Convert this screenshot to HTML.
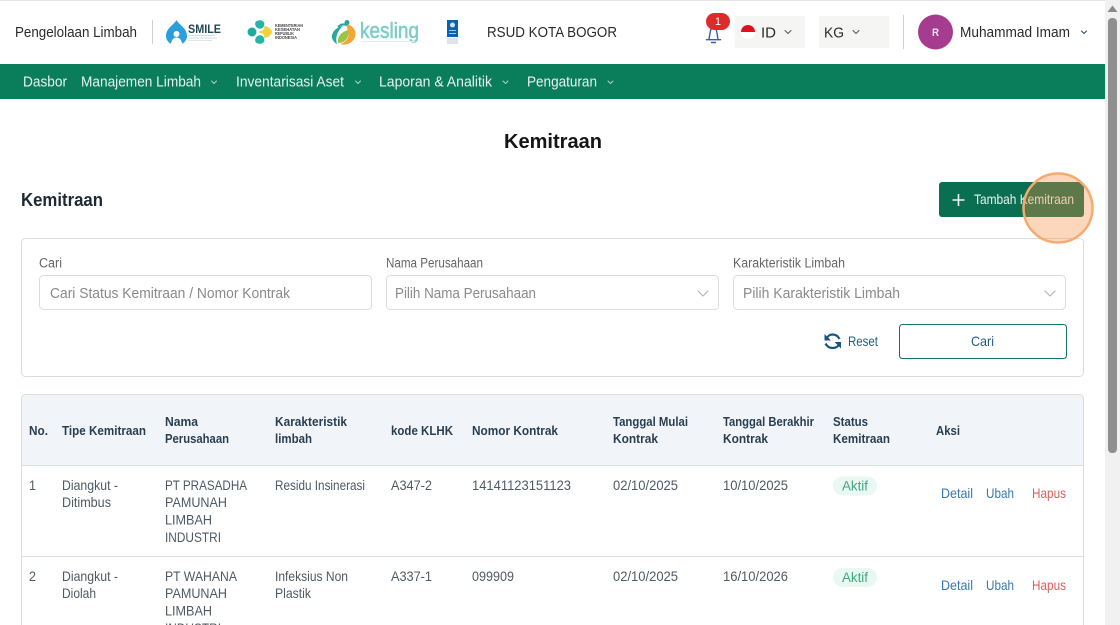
<!DOCTYPE html>
<html lang="id">
<head>
<meta charset="utf-8">
<title>Kemitraan</title>
<style>
html,body{margin:0;padding:0;width:1120px;height:625px;overflow:hidden;background:#fff}
svg{display:block}
text{font-family:"Liberation Sans",sans-serif;font-size:13px;fill:#4a5560}
.h text{font-weight:700;fill:#2a3e50;font-size:13px}
.b text{fill:#4f5a64;font-size:14px}
.nav text{fill:#e6f3ee;font-size:15px}
.top text{fill:#2a2a2a;font-size:15px}
.ph text{fill:#8a8a8a;font-size:15px}
.lb text{fill:#666;font-size:13.500px}
.a text{font-size:14px}
.chev{fill:none;stroke-linecap:round;stroke-linejoin:round}
</style>
</head>
<body>
<svg width="1120" height="625" viewBox="0 0 1120 625" xmlns="http://www.w3.org/2000/svg">
<rect width="1120" height="625" fill="#fff"/>
<rect x="0" y="0" width="1105" height="1" fill="#e4e4e4"/>

<!-- boxes behind header text -->
<rect x="735" y="16" width="70" height="32" fill="#f5f5f3"/>
<rect x="819" y="16" width="70" height="32" fill="#f5f5f3"/>

<!-- header -->
<g class="top">
<text x="15" y="37" textLength="122" lengthAdjust="spacingAndGlyphs">Pengelolaan Limbah</text>
<text x="487" y="37" textLength="130" lengthAdjust="spacingAndGlyphs">RSUD KOTA BOGOR</text>
<text x="761" y="37.500" textLength="15" lengthAdjust="spacingAndGlyphs">ID</text>
<text x="824" y="37.500" textLength="20" lengthAdjust="spacingAndGlyphs">KG</text>
<text x="960" y="37" textLength="110" lengthAdjust="spacingAndGlyphs">Muhammad Imam</text>
</g>
<rect x="152" y="20" width="1" height="24" fill="#cfcfcf"/>

<!-- SMILE logo -->
<path d="M176.500 20C174 25 166 28 166 36C166 41.500 171 45 176.500 45C182 45 187 41.500 187 36C187 28 179 25 176.500 20Z" fill="#2a9fdc"/>
<circle cx="176.500" cy="34" r="3" fill="#fff"/>
<path d="M171 45C171 40 173.500 37.500 176.500 37.500C179.500 37.500 182 40 182 45Z" fill="#fff"/>
<text x="188" y="33" textLength="33" lengthAdjust="spacingAndGlyphs" style="font-size:11.500px;font-weight:700;fill:#1e4756">SMILE</text>
<rect x="188" y="35" width="27" height="1" fill="#d3dade"/>
<rect x="188" y="37.500" width="29" height="1" fill="#d3dade"/>
<rect x="188" y="40" width="24" height="1" fill="#dfe4e7"/>

<!-- Kemenkes logo -->
<circle cx="252" cy="32" r="4.500" fill="#21a9a0"/>
<path d="M256 21.500C260 18.500 266 21 264 26C263 28.500 260 29.500 257.500 28C255 26.500 254.500 23 256 21.500Z" fill="#25b4a8"/>
<path d="M256 42.500C260 45.500 266 43 264 38C263 35.500 260 34.500 257.500 36C255 37.500 254.500 41 256 42.500Z" fill="#25b4a8"/>
<path d="M264 26C268 26 271 29 272.500 32C271 35 268 38 264 38C265.500 34 262 33.500 258 32C262 30.500 265.500 30 264 26Z" fill="#f0d33a"/>
<text x="275" y="27" textLength="28" lengthAdjust="spacingAndGlyphs" style="font-size:4.500px;font-weight:700;fill:#444">KEMENTERIAN</text>
<text x="275" y="31" textLength="25" lengthAdjust="spacingAndGlyphs" style="font-size:4.500px;font-weight:700;fill:#444">KESEHATAN</text>
<text x="275" y="35" textLength="19" lengthAdjust="spacingAndGlyphs" style="font-size:4.500px;font-weight:700;fill:#444">REPUBLIK</text>
<text x="275" y="39" textLength="22" lengthAdjust="spacingAndGlyphs" style="font-size:4.500px;font-weight:700;fill:#444">INDONESIA</text>

<!-- kesling logo -->
<path d="M346 24C353 25 357 31 355 37C353 43 346 46 340 44C347 42 350 36 348 31Z" fill="#f5a533"/>
<path d="M343 26C336 27 331 33 332 38C333 41 335 43 337 44C335 38 337 31 343 26Z" fill="#2aa6a0"/>
<path d="M338 43C337 37 341 32 348 30C350 36 346 43 338 43Z" fill="#9ac548"/>
<circle cx="347" cy="22.500" r="2.500" fill="#2aa6a0"/>
<path d="M338 27C341 24 344 24 347 25" stroke="#2aa6a0" stroke-width="2" fill="none"/>
<text x="360" y="38" textLength="59" lengthAdjust="spacingAndGlyphs" style="font-size:22px;fill:#7fcdc7;stroke:#7fcdc7;stroke-width:.6">kesling</text>
<rect x="361" y="41" width="54" height="1" fill="#dcefed"/>

<!-- UN logo -->
<rect x="447" y="20" width="11" height="17" fill="#0e62ab"/>
<circle cx="452.500" cy="25" r="2.500" fill="#cfe0ef"/>
<rect x="449" y="30" width="7" height="1" fill="#a9c7e2"/>
<rect x="449" y="33" width="7" height="1" fill="#a9c7e2"/>
<rect x="447" y="38" width="11" height="6" fill="#dbe5ee"/>

<!-- bell + badge -->
<path d="M709 39.500L710 33C710.500 29.500 711.500 27.500 713.500 27.500C715.500 27.500 716.500 29.500 717 33L718 39.500" fill="none" stroke="#3a5cb0" stroke-width="1.400"/>
<path d="M706.500 39.700H720.500" stroke="#3a5cb0" stroke-width="1.400" stroke-linecap="round"/>
<path d="M711.500 42.500H715.500" stroke="#3a5cb0" stroke-width="1.400" stroke-linecap="round"/>
<rect x="706" y="13" width="24" height="17" rx="8.500" fill="#df2a2c"/>
<text x="715" y="25" textLength="6" lengthAdjust="spacingAndGlyphs" style="font-size:11px;fill:#fff">1</text>

<!-- lang -->
<circle cx="748" cy="32" r="7" fill="#fff"/>
<path d="M741 32A7 7 0 0 1 755 32Z" fill="#e1101f"/>
<path class="chev" d="M785 30.500L788 33.500L791 30.500" stroke="#555" stroke-width="1"/>
<path class="chev" d="M853 30.500L856 33.500L859 30.500" stroke="#555" stroke-width="1"/>
<rect x="903" y="15" width="1" height="34" fill="#cfcfcf"/>
<circle cx="935.500" cy="32" r="17.500" fill="#a63c8f"/>
<text x="932" y="36" textLength="7" lengthAdjust="spacingAndGlyphs" style="font-size:11px;font-weight:700;fill:#f4e6f1">R</text>
<path class="chev" d="M1081.500 31L1084 33.500L1086.500 31" stroke="#2a5a78" stroke-width="1.200"/>

<!-- nav -->
<rect x="0" y="64" width="1105" height="35" fill="#0a7d5a"/>
<g class="nav">
<text x="23" y="86.500" textLength="44" lengthAdjust="spacingAndGlyphs">Dasbor</text>
<text x="81" y="86.500" textLength="120" lengthAdjust="spacingAndGlyphs">Manajemen Limbah</text>
<text x="236" y="86.500" textLength="108" lengthAdjust="spacingAndGlyphs">Inventarisasi Aset</text>
<text x="379" y="86.500" textLength="113" lengthAdjust="spacingAndGlyphs">Laporan &amp; Analitik</text>
<text x="527" y="86.500" textLength="70" lengthAdjust="spacingAndGlyphs">Pengaturan</text>
</g>
<g class="chev" stroke="#a9d4c5" stroke-width="1">
<path d="M211.500 81L214 83.500L216.500 81"/>
<path d="M355.500 81L358 83.500L360.500 81"/>
<path d="M503 81L505.500 83.500L508 81"/>
<path d="M608 81L610.500 83.500L613 81"/>
</g>

<!-- titles -->
<text x="504" y="148" textLength="98" lengthAdjust="spacingAndGlyphs" style="font-size:20px;font-weight:700;fill:#151515">Kemitraan</text>
<text x="21" y="206" textLength="82" lengthAdjust="spacingAndGlyphs" style="font-size:18px;font-weight:700;fill:#1d2a33">Kemitraan</text>

<!-- add button -->
<rect x="939" y="182" width="145" height="35" rx="3" fill="#0a6e50"/>
<path d="M958.500 194V206M952.500 200H964.500" stroke="#eef6f3" stroke-width="1.600"/>
<text x="974" y="204" textLength="100" lengthAdjust="spacingAndGlyphs" style="font-size:14px;fill:#e8f2ee">Tambah Kemitraan</text>

<!-- filter card -->
<rect x="21.500" y="238.500" width="1062" height="138" rx="4" fill="#fff" stroke="#dcdcdc"/>
<g class="lb">
<text x="39" y="267.500" textLength="23" lengthAdjust="spacingAndGlyphs">Cari</text>
<text x="386" y="267.500" textLength="97" lengthAdjust="spacingAndGlyphs">Nama Perusahaan</text>
<text x="733" y="267.500" textLength="112" lengthAdjust="spacingAndGlyphs">Karakteristik Limbah</text>
</g>
<g fill="#fff" stroke="#dcdcdc">
<rect x="39.500" y="275.500" width="332" height="34" rx="4"/>
<rect x="386.500" y="275.500" width="332" height="34" rx="4"/>
<rect x="733.500" y="275.500" width="332" height="34" rx="4"/>
</g>
<g class="ph">
<text x="50" y="298" textLength="240" lengthAdjust="spacingAndGlyphs">Cari Status Kemitraan / Nomor Kontrak</text>
<text x="395" y="298" textLength="141" lengthAdjust="spacingAndGlyphs">Pilih Nama Perusahaan</text>
<text x="743" y="298" textLength="157" lengthAdjust="spacingAndGlyphs">Pilih Karakteristik Limbah</text>
</g>
<g class="chev" stroke="#b5b5b5" stroke-width="1.200">
<path d="M698 291L703 296L708 291"/>
<path d="M1045 291L1050 296L1055 291"/>
</g>

<!-- reset -->
<g fill="none" stroke="#17567f" stroke-width="2.200">
<path d="M826.500 339C827.500 336 830 334.500 832.500 334.500C835.500 334.500 838 336 839.500 339"/>
<path d="M839.500 343.500C838.500 346.500 835.500 348 832.500 348C829.500 348 827 346.500 825.500 343.500"/>
</g>
<path d="M824.500 334V340.500H831Z" fill="#17567f"/>
<path d="M841 348.500V342H834.500Z" fill="#17567f"/>
<text x="848" y="346" textLength="30" lengthAdjust="spacingAndGlyphs" style="font-size:14px;fill:#245d85">Reset</text>
<rect x="899.500" y="324.500" width="167" height="34" rx="3" fill="#fff" stroke="#14706a"/>
<text x="971" y="346" textLength="23" lengthAdjust="spacingAndGlyphs" style="font-size:14px;fill:#245d85">Cari</text>

<!-- table -->
<path d="M21.500 625V398.500A4 4 0 0 1 25.500 394.500H1080A4 4 0 0 1 1083.500 398.500V625" fill="#fff" stroke="#dcdcdc"/>
<path d="M22 465V398.500A4 4 0 0 1 25.500 395H1080A4 4 0 0 1 1083 398.500V465Z" fill="#f1f5f9"/>
<rect x="22" y="465" width="1061" height="1" fill="#dcdfe2"/>
<rect x="22" y="556" width="1061" height="1" fill="#dcdfe2"/>

<g class="h">
<text x="29" y="435" textLength="19" lengthAdjust="spacingAndGlyphs">No.</text>
<text x="62" y="435" textLength="84" lengthAdjust="spacingAndGlyphs">Tipe Kemitraan</text>
<text x="165" y="426" textLength="33" lengthAdjust="spacingAndGlyphs">Nama</text>
<text x="165" y="443" textLength="64" lengthAdjust="spacingAndGlyphs">Perusahaan</text>
<text x="275" y="426" textLength="72" lengthAdjust="spacingAndGlyphs">Karakteristik</text>
<text x="275" y="443" textLength="37" lengthAdjust="spacingAndGlyphs">limbah</text>
<text x="391" y="435" textLength="62" lengthAdjust="spacingAndGlyphs">kode KLHK</text>
<text x="472" y="435" textLength="86" lengthAdjust="spacingAndGlyphs">Nomor Kontrak</text>
<text x="613" y="426" textLength="75" lengthAdjust="spacingAndGlyphs">Tanggal Mulai</text>
<text x="613" y="443" textLength="45" lengthAdjust="spacingAndGlyphs">Kontrak</text>
<text x="723" y="426" textLength="91" lengthAdjust="spacingAndGlyphs">Tanggal Berakhir</text>
<text x="723" y="443" textLength="45" lengthAdjust="spacingAndGlyphs">Kontrak</text>
<text x="833" y="426" textLength="35" lengthAdjust="spacingAndGlyphs">Status</text>
<text x="833" y="443" textLength="57" lengthAdjust="spacingAndGlyphs">Kemitraan</text>
<text x="936" y="435" textLength="24" lengthAdjust="spacingAndGlyphs">Aksi</text>
</g>

<g class="b">
<text x="29" y="490" textLength="7" lengthAdjust="spacingAndGlyphs">1</text>
<text x="62" y="490" textLength="56" lengthAdjust="spacingAndGlyphs">Diangkut -</text>
<text x="62" y="507" textLength="49" lengthAdjust="spacingAndGlyphs">Ditimbus</text>
<text x="165" y="490" textLength="82" lengthAdjust="spacingAndGlyphs">PT PRASADHA</text>
<text x="165" y="507" textLength="62" lengthAdjust="spacingAndGlyphs">PAMUNAH</text>
<text x="165" y="524.500" textLength="47" lengthAdjust="spacingAndGlyphs">LIMBAH</text>
<text x="165" y="542" textLength="56" lengthAdjust="spacingAndGlyphs">INDUSTRI</text>
<text x="275" y="490" textLength="90" lengthAdjust="spacingAndGlyphs">Residu Insinerasi</text>
<text x="391" y="490" textLength="41" lengthAdjust="spacingAndGlyphs">A347-2</text>
<text x="472" y="490" textLength="99" lengthAdjust="spacingAndGlyphs">14141123151123</text>
<text x="613" y="490" textLength="65" lengthAdjust="spacingAndGlyphs">02/10/2025</text>
<text x="723" y="490" textLength="65" lengthAdjust="spacingAndGlyphs">10/10/2025</text>

<text x="29" y="581" textLength="7" lengthAdjust="spacingAndGlyphs">2</text>
<text x="62" y="581" textLength="56" lengthAdjust="spacingAndGlyphs">Diangkut -</text>
<text x="62" y="598" textLength="34" lengthAdjust="spacingAndGlyphs">Diolah</text>
<text x="165" y="581" textLength="72" lengthAdjust="spacingAndGlyphs">PT WAHANA</text>
<text x="165" y="598" textLength="62" lengthAdjust="spacingAndGlyphs">PAMUNAH</text>
<text x="165" y="615.500" textLength="47" lengthAdjust="spacingAndGlyphs">LIMBAH</text>
<text x="165" y="633" textLength="56" lengthAdjust="spacingAndGlyphs">INDUSTRI</text>
<text x="275" y="581" textLength="73" lengthAdjust="spacingAndGlyphs">Infeksius Non</text>
<text x="275" y="598" textLength="36" lengthAdjust="spacingAndGlyphs">Plastik</text>
<text x="391" y="581" textLength="41" lengthAdjust="spacingAndGlyphs">A337-1</text>
<text x="472" y="581" textLength="42" lengthAdjust="spacingAndGlyphs">099909</text>
<text x="613" y="581" textLength="65" lengthAdjust="spacingAndGlyphs">02/10/2025</text>
<text x="723" y="581" textLength="65" lengthAdjust="spacingAndGlyphs">16/10/2026</text>
</g>

<!-- pills & actions -->
<rect x="833" y="476.500" width="44" height="19" rx="9.500" fill="#e9f8f2"/>
<text x="842" y="490.500" textLength="26" lengthAdjust="spacingAndGlyphs" style="font-size:13.500px;fill:#3fa983">Aktif</text>
<rect x="833" y="568" width="44" height="19" rx="9.500" fill="#e9f8f2"/>
<text x="842" y="582" textLength="26" lengthAdjust="spacingAndGlyphs" style="font-size:13.500px;fill:#3fa983">Aktif</text>

<g class="a">
<text x="941" y="498" textLength="32" lengthAdjust="spacingAndGlyphs" style="fill:#3a78ad">Detail</text>
<text x="986" y="498" textLength="28" lengthAdjust="spacingAndGlyphs" style="fill:#3a78ad">Ubah</text>
<text x="1032" y="498" textLength="34" lengthAdjust="spacingAndGlyphs" style="fill:#d9605f">Hapus</text>
<text x="941" y="590" textLength="32" lengthAdjust="spacingAndGlyphs" style="fill:#3a78ad">Detail</text>
<text x="986" y="590" textLength="28" lengthAdjust="spacingAndGlyphs" style="fill:#3a78ad">Ubah</text>
<text x="1032" y="590" textLength="34" lengthAdjust="spacingAndGlyphs" style="fill:#d9605f">Hapus</text>
</g>

<!-- highlight circle -->
<circle cx="1058" cy="208" r="34.500" fill="#fa8c3c" fill-opacity=".35" stroke="#f5ab70" stroke-width="2.500"/>

<!-- scrollbar -->
<rect x="1105" y="0" width="15" height="625" fill="#f1f1f1"/>
<path d="M1107.500 12L1112.500 5.500L1117.500 12Z" fill="#8a8a8a"/>
<rect x="1108" y="18" width="9" height="435" rx="4" fill="#8f8f8f"/>
</svg>
</body>
</html>
